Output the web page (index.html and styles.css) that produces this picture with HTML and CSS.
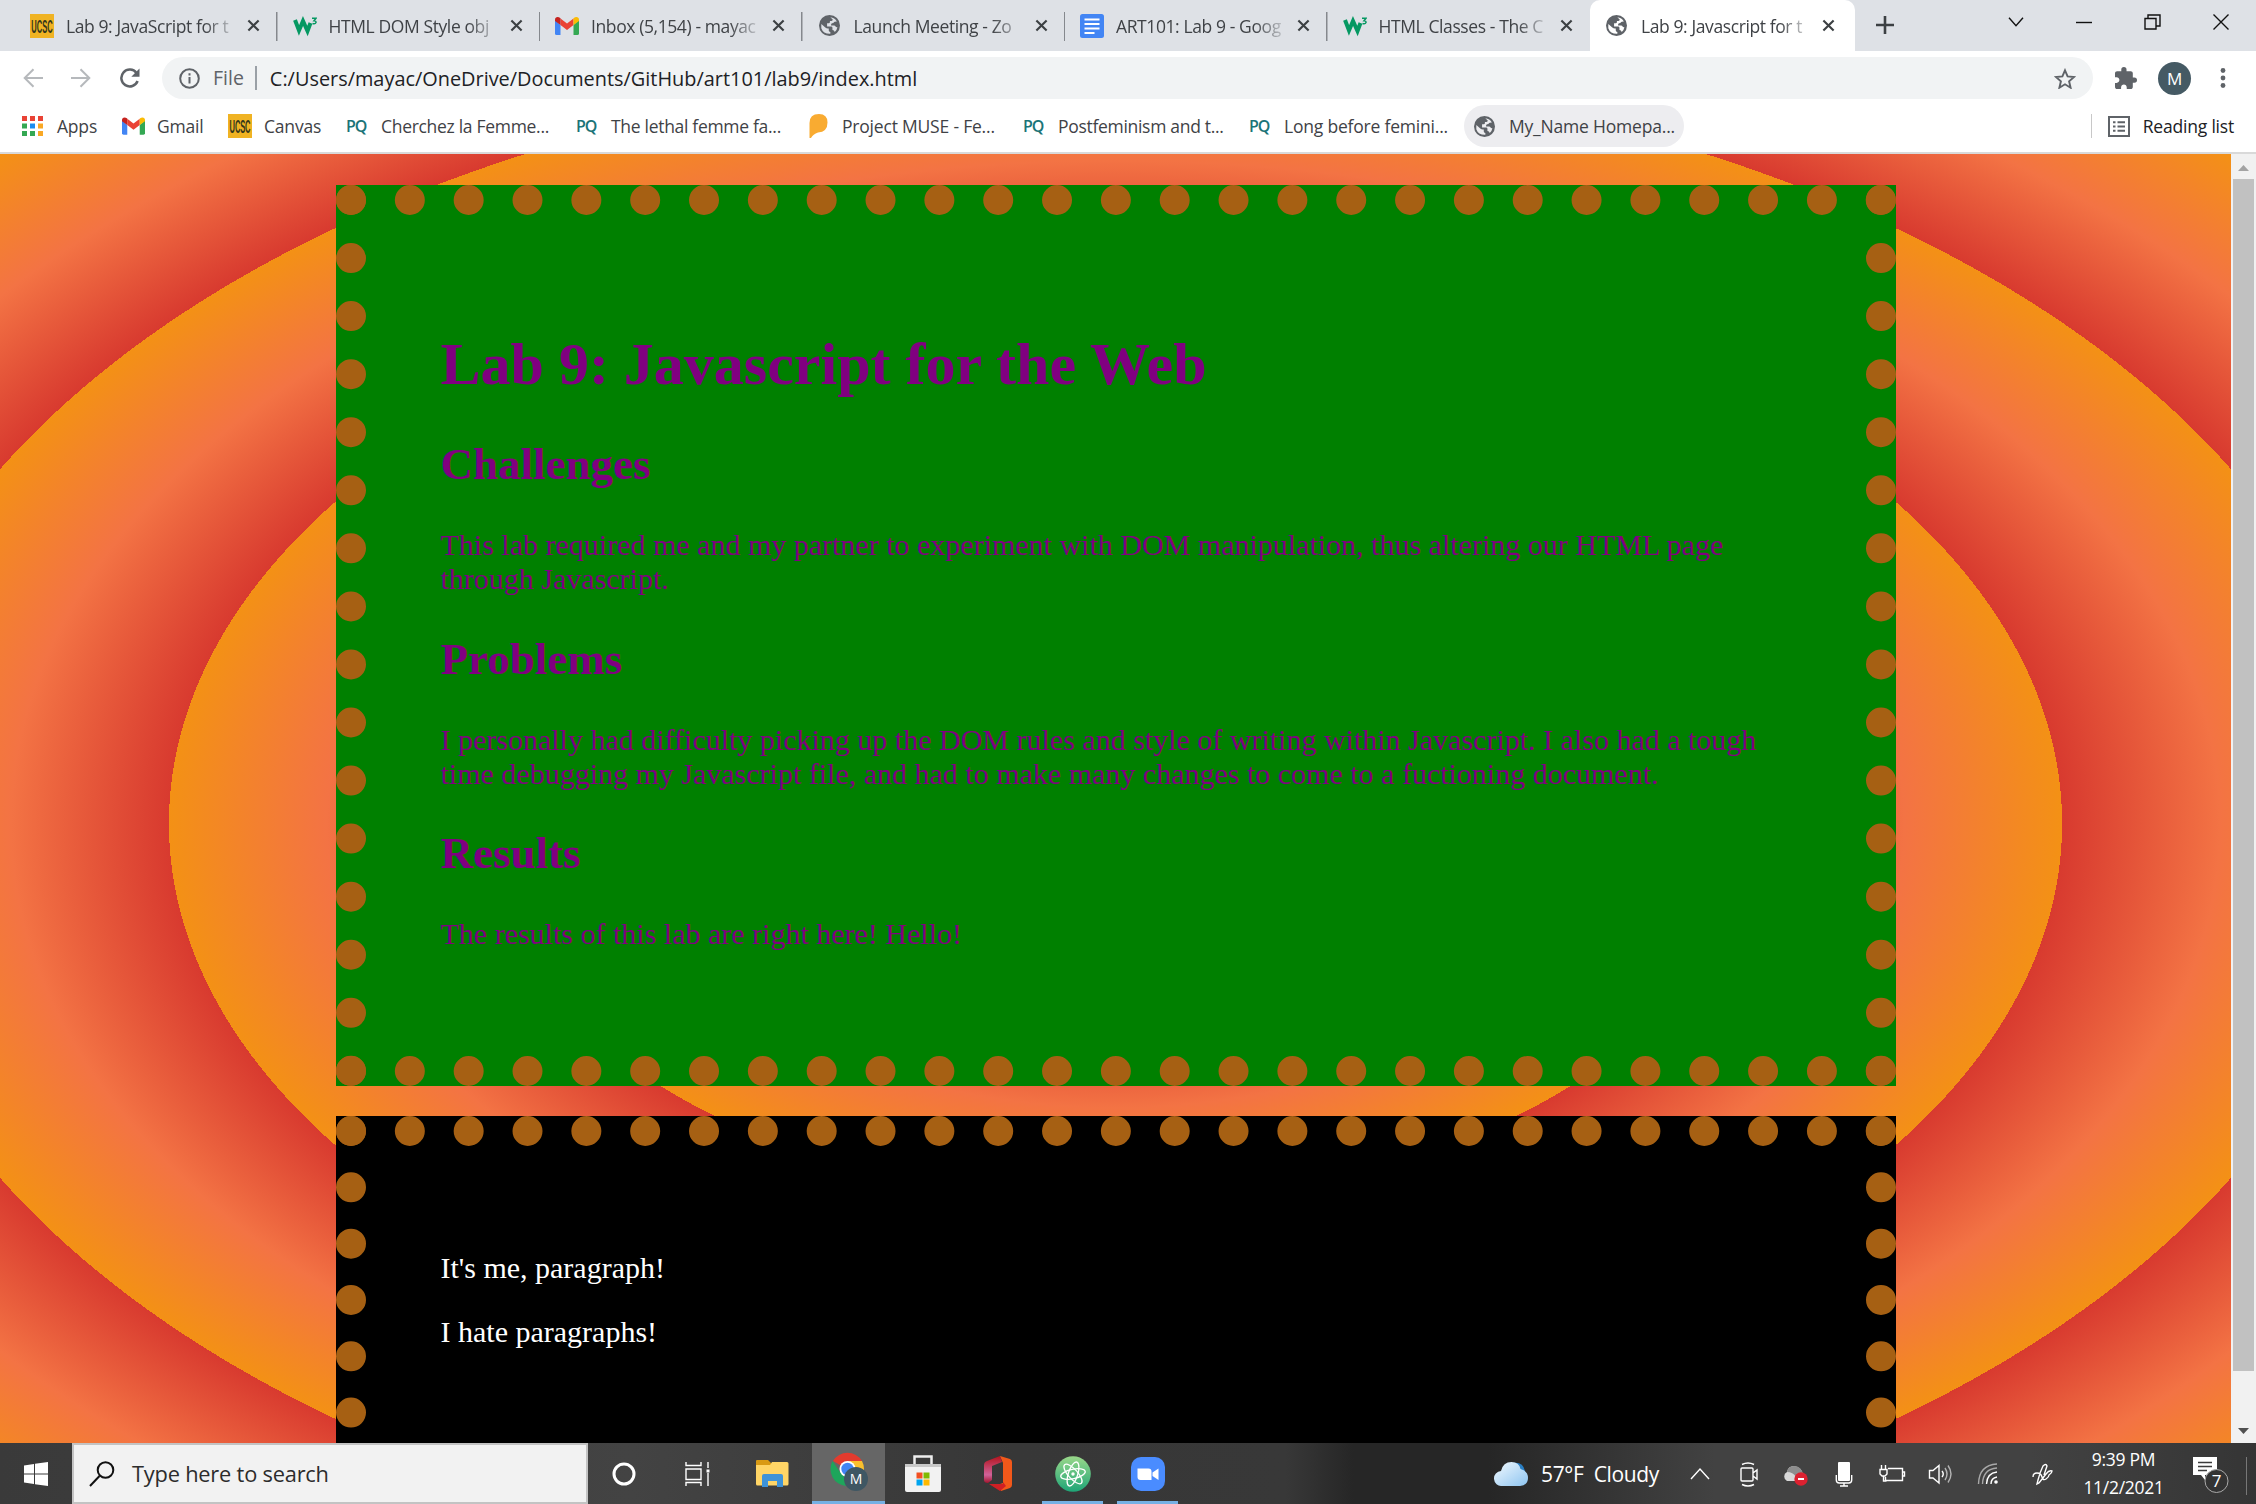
FILE: index.html
```html
<!DOCTYPE html>
<html lang="en">
<head>
<meta charset="utf-8">
<title>Lab 9: Javascript for the Web</title>
<link rel="stylesheet" href="styles.css">
</head>
<body>
<svg class="defs" width="0" height="0">
  <defs>
    <symbol id="globe" viewBox="2 2 20 20"><path fill="#5f6368" fill-rule="evenodd" d="M12 2a10 10 0 1 0 0 20 10 10 0 0 0 0-20zM4.200 10.500 8 14q1 .8 2.500.8h.8v2q0 1.400 1.500 1.400v1.600Q6 20 4.200 14.500zM12.800 4.200Q17 4.500 19 8.200l-2 .3q-1 .2-1.300 1.200l-1.200.2q-1 .3-1 1.300v.8h3q1.500 0 1.500 1.500l1.500.2q-.5 3-2.500 4.500-.5-1.700-2.200-1.900v-2.100q0-1.300-1.300-1.300H9.700v-3h1.500q1.200 0 1.200-1.200V7.600h1.500q1.200 0 1.200-1.200z"/></symbol>
    <symbol id="gmail" viewBox="0 0 24 18"><path fill="#4285f4" d="M0 3v13.500Q0 18 1.600 18H5.500V8z"/><path fill="#34a853" d="M24 3v13.500q0 1.500-1.600 1.500H18.500V8z"/><path fill="#ea4335" d="M5.500 1.500 12 6.500l6.500-5V8L12 13 5.500 8z"/><path fill="#c5221f" d="M0 2.500C0 0 3 -1 5.500 1.300V8L0 4z"/><path fill="#fbbc04" d="M24 2.500C24 0 21 -1 18.500 1.300V8L24 4z"/></symbol>
    <symbol id="w3" viewBox="0 0 24 18"><path fill="none" stroke="#059862" stroke-width="4" d="M2 3l4 10.500L10 4l4.500 10 3-8"/><path fill="none" stroke="#059862" stroke-width="1.500" d="M19 1.200h4L21 3.800q2.200 0 2 1.700-.8 2-3.500 1"/></symbol>
    <symbol id="x" viewBox="0 0 14 14"><path stroke="#3c4043" stroke-width="2.300" d="M1.500 1.500l11 11M12.500 1.500l-11 11"/></symbol>
    <symbol id="ucsc" viewBox="0 0 24 24"><path fill="#f0b323" d="M0 0h24v24H0z"/><text transform="translate(12 18.500) scale(.72 1.700)" text-anchor="middle" font-family="Liberation Sans" font-weight="bold" font-size="10.500" fill="#33361c">UCSC</text></symbol>
  </defs>
</svg>
<div class="screen">
  <header class="tabs">
    <div class="tab"><svg class="fav"><use href="#ucsc"/></svg><span class="title">Lab 9: JavaScript for t</span><svg class="close"><use href="#x"/></svg></div>
    <div class="tab"><svg class="fav"><use href="#w3"/></svg><span class="title">HTML DOM Style obj</span><svg class="close"><use href="#x"/></svg></div>
    <div class="tab"><svg class="fav"><use href="#gmail"/></svg><span class="title">Inbox (5,154) - mayac</span><svg class="close"><use href="#x"/></svg></div>
    <div class="tab"><svg class="fav fit"><use href="#globe"/></svg><span class="title">Launch Meeting - Zo</span><svg class="close"><use href="#x"/></svg></div>
    <div class="tab"><svg class="fav" viewBox="0 0 24 24"><rect width="24" height="24" rx="2.500" fill="#4285f4"/><path stroke="#fff" stroke-width="2.200" d="M4.500 5.500h15M4.500 10h15M4.500 14.500h15M4.500 19h10"/></svg><span class="title">ART101: Lab 9 - Goog</span><svg class="close"><use href="#x"/></svg></div>
    <div class="tab last"><svg class="fav"><use href="#w3"/></svg><span class="title">HTML Classes - The C</span><svg class="close"><use href="#x"/></svg></div>
    <div class="tab active"><svg class="fav fit"><use href="#globe"/></svg><span class="title">Lab 9: Javascript for t</span><svg class="close"><use href="#x"/></svg></div>
    <svg class="plus" viewBox="0 0 18 18"><path stroke="#3c4043" stroke-width="2.600" d="M9 0v18M0 9h18"/></svg>
    <div class="window-buttons">
      <svg width="16" height="10" viewBox="0 0 16 10"><path d="M1 .8l7 8 7-8"/></svg>
      <svg width="16" height="10" viewBox="0 0 16 10"><path d="M0 5.500h16"/></svg>
      <svg width="17" height="16" viewBox="0 0 17 16"><path d="M1 4.500h11v10.500H1zM4 4.500V1h12v11h-4"/></svg>
      <svg width="16" height="16" viewBox="0 0 16 16"><path d="M.5.5l15 15M15.500.5l-15 15"/></svg>
    </div>
  </header>
  <div class="toolbar">
    <svg class="nav" viewBox="0 0 20 20"><path fill="none" stroke="#b6b9bc" stroke-width="2" d="M20 10H2M10.500 1.200 1.700 10l8.800 8.800"/></svg>
    <svg class="nav" viewBox="0 0 20 20"><path fill="none" stroke="#b6b9bc" stroke-width="2" d="M0 10h18M9.500 1.200l8.800 8.800-8.800 8.800"/></svg>
    <svg class="nav reload" viewBox="0 0 22 20"><path fill="none" stroke="#5f6368" stroke-width="2.500" d="M17.500 5A8.400 8.400 0 1 0 18.600 13"/><path fill="#5f6368" d="M20.500.5v8.200h-8.200z"/></svg>
    <div class="omnibox">
      <svg width="21" height="21" viewBox="0 0 21 21"><circle cx="10.500" cy="10.500" r="9.300" fill="none" stroke="#5f6368" stroke-width="2"/><path stroke="#5f6368" stroke-width="2" d="M10.500 9v6.500M10.500 5.200v2.200"/></svg>
      <span class="scheme">File</span>
      <span class="url">C:/Users/mayac/OneDrive/Documents/GitHub/art101/lab9/index.html</span>
      <svg class="star" width="22" height="21" viewBox="0 0 22 21"><path fill="none" stroke="#5f6368" stroke-width="1.900" stroke-linejoin="miter" d="M11 2.300l2.600 6.100 6.500.6-5 4.300 1.500 6.400L11 16.300l-5.600 3.400 1.500-6.400-5-4.300 6.500-.6z"/></svg>
    </div>
    <svg class="puzzle" width="22" height="22" viewBox="2 1 21 21"><path fill="#5f6368" d="M20.500 11H19V7c0-1.100-.9-2-2-2h-4V3.500a2.500 2.500 0 0 0-5 0V5H4c-1.100 0-2 .9-2 2v3.800h1.500c1.500 0 2.700 1.200 2.700 2.700S5 16.200 3.500 16.200H2V20c0 1.100.9 2 2 2h3.800v-1.500c0-1.500 1.200-2.700 2.700-2.700s2.700 1.200 2.700 2.700V22H17c1.100 0 2-.9 2-2v-4h1.500a2.500 2.500 0 0 0 0-5z"/></svg>
    <span class="avatar">M</span>
    <svg width="6" height="20" viewBox="0 0 6 20"><g fill="#5f6368"><circle cx="3" cy="2.500" r="2.400"/><circle cx="3" cy="10" r="2.400"/><circle cx="3" cy="17.500" r="2.400"/></g></svg>
  </div>
  <nav class="bookmarks">
    <a class="b-apps"><svg width="21" height="20" viewBox="0 0 21 20"><path fill="#e94335" d="M0 0h5v5H0zM8 0h5v5H8zM16 0h5v5h-5z"/><path fill="#34a853" d="M0 7.500h5v5H0zM0 15h5v5H0zM8 15h5v5H8z"/><path fill="#1a8cf0" d="M8 7.500h5v5H8z"/><path fill="#f9a825" d="M16 7.500h5v5h-5zM16 15h5v5h-5z"/></svg><span>Apps</span></a>
    <a class="b-gmail"><svg width="23" height="18"><use href="#gmail"/></svg><span>Gmail</span></a>
    <a class="b-canvas"><svg width="24" height="24"><use href="#ucsc"/></svg><span>Canvas</span></a>
    <a class="b-cherchez"><b>PQ</b><span>Cherchez la Femme...</span></a>
    <a class="b-lethal"><b>PQ</b><span>The lethal femme fa...</span></a>
    <a class="b-muse"><svg width="19" height="24" viewBox="0 0 19 24"><path fill="#f9ab31" d="M.5 9Q.5 0 10 0q8.500 0 8.500 8.500Q18.500 18 9 18.500 4 20 2 24H.5z"/></svg><span>Project MUSE - Fe...</span></a>
    <a class="b-post"><b>PQ</b><span>Postfeminism and t...</span></a>
    <a class="b-long"><b>PQ</b><span>Long before femini...</span></a>
    <a class="b-home"><svg width="21" height="21"><use href="#globe"/></svg><span>My_Name Homepa...</span></a>
    <a class="b-reading"><svg width="22" height="21" viewBox="0 0 22 21"><path fill="none" stroke="#5f6368" stroke-width="2" d="M1 1h20v19H1z"/><path stroke="#5f6368" stroke-width="2" d="M5 6.200h2.500M9.500 6.200H17M5 10.500h2.500M9.500 10.500H17M5 14.800h2.500M9.500 14.800H17"/></svg><span>Reading list</span></a>
  </nav>
  <div class="viewport">
    <main class="page">
      <section class="box green">
        <h1>Lab 9: Javascript for the Web</h1>
        <h2>Challenges</h2>
        <p>This lab required me and my partner to experiment with DOM manipulation, thus altering our HTML page through Javascript.</p>
        <h2>Problems</h2>
        <p>I personally had difficulty picking up the DOM rules and style of writing within Javascript. I also had a tough time debugging my Javascript file, and had to make many changes to come to a fuctioning document.</p>
        <h2>Results</h2>
        <p>The results of this lab are right here! Hello!</p>
      </section>
      <section class="box black">
        <p>It's me, paragraph!</p>
        <p>I hate paragraphs!</p>
      </section>
    </main>
    <div class="scrollbar">
      <svg width="25" height="25" viewBox="0 0 25 25"><path fill="#a3a3a3" d="M7 17l5.500-6 5.500 6z"/></svg>
      <div class="track"><div class="thumb"></div></div>
      <svg width="25" height="25" viewBox="0 0 25 25"><path fill="#505050" d="M7 10h11l-5.500 6z"/></svg>
    </div>
  </div>
  <footer class="taskbar">
    <div class="start"><svg width="24" height="24" viewBox="0 0 24 24"><path fill="#fff" d="M0 3.500 10 2v9.500H0zM11 1.800 24 0v11.500H11zM0 12.500h10V22L0 20.500zM11 12.500h13V24l-13-1.800z"/></svg></div>
    <div class="search"><svg width="26" height="26" viewBox="0 0 26 26"><path fill="none" stroke="#111" stroke-width="2" d="M1 25 10.500 15"/><circle cx="16.500" cy="9" r="7.800" fill="none" stroke="#111" stroke-width="2"/></svg><span>Type here to search</span></div>
    <div class="cell cortana"><svg width="24" height="24" viewBox="0 0 24 24"><circle cx="12" cy="12" r="10" fill="none" stroke="#fff" stroke-width="3"/></svg></div>
    <div class="cell taskview"><svg width="25" height="24" viewBox="0 0 25 24"><path fill="none" stroke="#fff" stroke-width="1.400" d="M1 0v3.500h15V0M1 7h15v10.500H1zM1 24v-3.500h15V24M23 0v6M23 11v13"/><path fill="#fff" d="M21.500 7.500h3v3h-3z"/></svg></div>
    <div class="cell"><svg width="33" height="27" viewBox="0 0 33 27"><path fill="#d99a14" d="M0 1q0-1 1-1h11l3 3v4H0z"/><path fill="#ffd566" d="M0 5h14l2-3h15q1.500 0 1.500 1.500V24q0 1.500-1.500 1.500H1.500Q0 25.500 0 24z"/><path fill="#3f93d8" d="M6 27V16q0-2 2-2h17q2 0 2 2v11h-6v-6h-9v6z"/></svg></div>
    <div class="cell chrome"><svg width="42" height="40" viewBox="0 0 42 40"><path fill="#e33b2e" d="M17 17 3 9A17 17 0 0 1 32 9H17z"/><path fill="#1ea55b" d="M2.500 9A17 17 0 0 0 16 34l6-12-12-2z"/><path fill="#fbc02d" d="M17 9h15a17 17 0 0 1-15 25l8-16z"/><circle cx="17.500" cy="17" r="8" fill="#fff"/><circle cx="17.500" cy="17" r="6.200" fill="#4285f4"/><circle cx="26" cy="27" r="12" fill="#3f5763"/><text x="26" y="32" text-anchor="middle" font-size="14" fill="#fff">M</text></svg></div>
    <div class="cell"><svg width="36" height="37" viewBox="0 0 36 37"><path fill="none" stroke="#eee" stroke-width="2.500" d="M9.500 12V1.500h17V12"/><path fill="#f2f2f2" d="M0 9h36v26q0 2-2 2H2q-2 0-2-2z"/><path fill="#c8c8c8" d="M0 9h36v3H0z"/><path fill="#f25022" d="M11.500 17.500h6v6h-6z"/><path fill="#7fba00" d="M18.500 17.500h6v6h-6z"/><path fill="#00a4ef" d="M11.500 24.500h6v6h-6z"/><path fill="#ffb900" d="M18.500 24.500h6v6h-6z"/></svg></div>
    <div class="cell"><svg width="28" height="35" viewBox="0 0 28 35"><defs><linearGradient id="o" x2="0" y2="1"><stop stop-color="#b3121c"/><stop offset=".7" stop-color="#d0639a"/><stop offset="1" stop-color="#a3142c"/></linearGradient></defs><path fill="url(#o)" d="M16 0 3 5Q0 6 0 9v15q0 3 4 3l4-3V10l10-4z"/><path fill="#f2581a" d="m16 0 10 3q2 1 2 3v23q0 2-2 3l-9 3-1-7 3-1V7z"/><path fill="#cf1f24" d="M5 28h14v-2l3 4-6 5z"/></svg></div>
    <div class="cell open"><svg width="36" height="36" viewBox="0 0 36 36"><defs><linearGradient id="a" x2="0" y2="1"><stop stop-color="#9ad88a"/><stop offset="1" stop-color="#1ea577"/></linearGradient></defs><circle cx="18" cy="18" r="17.800" fill="url(#a)"/><g fill="none" stroke="#fff" stroke-width="1.300"><ellipse cx="18" cy="18" rx="12.500" ry="4.700" transform="rotate(-12 18 18)"/><ellipse cx="18" cy="18" rx="12.500" ry="4.700" transform="rotate(48 18 18)"/><ellipse cx="18" cy="18" rx="12.500" ry="4.700" transform="rotate(108 18 18)"/></g><circle cx="18" cy="18" r="1.700" fill="#fff"/></svg></div>
    <div class="cell open"><svg width="34" height="34" viewBox="0 0 34 34"><rect width="34" height="34" rx="10" fill="#4a8cff"/><path fill="#fff" d="M6.500 11.500h11q3 0 3 3V23h-11q-3 0-3-3zM21.500 15.500l6-4V23l-6-4z"/></svg></div>
    <div class="tray">
      <div class="weather"><svg width="34" height="24" viewBox="0 0 34 24"><defs><linearGradient id="c" x2="1" y2="1"><stop stop-color="#f3faff"/><stop offset="1" stop-color="#8dc4f0"/></linearGradient></defs><path fill="#2a7fc4" d="M18 1q11-2 13 8l2 8-8-2z"/><path fill="url(#c)" d="M8 24a7.500 7.500 0 0 1-1-15Q9 0 17.500 0 25 0 26.500 7 34 9 34 16t-8 8z"/></svg><span>57°F&nbsp; Cloudy</span></div>
      <svg class="ti" viewBox="-24 -20 48 40"><path d="M-9 5 0-5l9 10"/></svg>
      <svg class="ti" viewBox="-24 -20 48 40"><path d="M-6-6H4Q5-6 5-5V6q0 1-1 1H-6q-1 0-1-1V-5q0-1 1-1zM5-1l4-3v9L5 2M-6-9.500q6-3 12 0M-6 10.500q6 3 12 0"/></svg>
      <svg class="ti" viewBox="-24 -20 48 40"><path fill="#d8d8d8" stroke="none" d="M-9 7a5 5 0 0 1 0-9Q-8-8-2-8 6-7 7 1L4 7z"/><path fill="#8d8d8d" stroke="none" d="M-9-2Q-8-8-2-8 5-8 7 0L0 3q-3-5-9-5z"/><circle cx="5" cy="5" r="6.700" fill="#dc2130" stroke="none"/><path stroke-width="2" d="M2 5h6"/></svg>
      <svg class="ti" viewBox="-24 -20 48 40"><rect x="-6" y="-12" width="12" height="19" rx="1" fill="#fff" stroke="none"/><path stroke-width="1.400" d="M-7.700 1v5q0 3 3 3h9.400q3 0 3-3V1M0 9v3M-4 12h8"/></svg>
      <svg class="ti" viewBox="-24 -20 48 40"><path d="M-4-5.500H10.500V6.500H-6.500V3M11-2h1.500v4H11M-10.500-9v4M-6.500-9v4M-12-4.500h7V0l-2 2h-3l-2-2zM-8.500 2v5h3"/></svg>
      <svg class="ti" viewBox="-24 -20 48 40"><path d="M-10.500-3.500h3.500l6-5V9l-6-5h-3.500zM2-3q2.500 3 0 6"/><path opacity=".6" d="M5-6q4 6 0 12M8-8.500q6 8.500 0 17"/></svg>
      <svg class="ti" viewBox="-24 -20 48 40"><circle cx="8" cy="8" r="1.800" fill="#fff" stroke="none"/><path d="M3 10q0-6 6-7M-1.500 10Q-1-1 9-2"/><path opacity=".55" d="M-5.500 10Q-5-5 9-6M-9.500 10Q-9-9 9-10"/></svg>
      <svg class="ti pen" viewBox="-24 -20 48 40"><path d="M-9 3Q-9-1-5-1-1-1 0 3T4 5 7 1Q10-1 10-3 7-4 4 0L-3 9-5 10-4 6Q-2-2 1-8q3-3 4 0L2 1"/></svg>
      <div class="clock"><span>9:39 PM</span><span>11/2/2021</span></div>
      <div class="notify"><svg width="38" height="38" viewBox="0 0 38 38"><path fill="#fff" d="M1 0h24v18H13v5l-4-5H1z"/><path stroke="#3b3b3b" stroke-width="1.300" d="M6 5.500h14M6 9.500h14M6 13.500h9"/><circle cx="24.500" cy="24" r="11.500" fill="#333" stroke="#aaa"/><text x="24.500" y="30" text-anchor="middle" font-size="17" fill="#fff">7</text></svg></div>
    </div>
  </footer>
</div>
</body>
</html>
```
FILE: styles.css
```css
* { box-sizing: border-box; }
body { margin: 0; overflow: hidden; font-family: "Open Sans", "Noto Sans", sans-serif; }
.defs { position: absolute; }
.screen { display: flex; flex-direction: column; width: 2256px; height: 1504px; overflow: hidden; background: #fff; }
svg { display: block; flex: none; }

.tabs { display: flex; align-items: flex-start; height: 51px; padding-left: 15px; background: #dee1e6; }
.tab { display: flex; flex: none; align-items: center; width: 262.5px; height: 51px; padding-left: 15px; background: linear-gradient(#85888d, #85888d) right 12px / 1.5px 29px no-repeat; }
.tab.last { background: none; }
.tab.active { width: 265px; background: #fff; border-radius: 10px 10px 0 0; }
.fav { width: 24px; height: 24px; margin-right: 12px; }
.fit { width: 21px; height: 21px; margin: 0 14px 0 1px; }
.title { width: 177px; white-space: nowrap; font-size: 17.500px; letter-spacing: -.4px; color: #3f4246; mask-image: linear-gradient(90deg, #000 78%, transparent 98%); }
.close { width: 13px; height: 13px; margin-left: 4px; }
.plus { width: 18px; height: 18px; margin: 16px 0 0 21px; }
.window-buttons { display: flex; align-items: center; justify-content: space-between; width: 221px; height: 43px; margin-left: auto; margin-right: 27px; }
.window-buttons path { fill: none; stroke: #111; stroke-width: 1.400; }

.toolbar { display: flex; align-items: center; height: 54px; padding: 0 30px 0 23px; }
.nav { width: 20px; height: 20px; margin-right: 28px; }
.reload { width: 22px; margin-right: 21px; }
.omnibox { display: flex; align-items: center; width: 1935px; height: 42px; padding: 0 17px; border-radius: 21px; background: #f1f3f4; }
.scheme { margin-left: 13px; padding-right: 11px; border-right: 2px solid #9aa0a6; color: #5f6368; font-size: 19.500px; line-height: 24px; }
.url { margin-left: 13px; color: #202124; font-size: 19.900px; }
.star { margin-left: auto; }
.puzzle { margin-left: 22px; }
.avatar { width: 33px; height: 33px; margin: 0 29px 0 21px; border-radius: 50%; background: #455a64; color: #fff; font-size: 17px; line-height: 33px; text-align: center; }

.bookmarks { display: flex; align-items: flex-start; height: 49px; padding-left: 22px; border-bottom: 2px solid #d9d9d9; color: #3f4246; font-size: 17.500px; letter-spacing: -.2px; white-space: nowrap; }
.bookmarks a { display: flex; flex: none; align-items: center; height: 42px; gap: 14px; }
.bookmarks b { width: 21px; color: #1b7478; font-size: 16px; font-weight: 600; letter-spacing: -1px; }
.bookmarks .b-apps { width: 100px; }
.bookmarks .b-gmail { width: 106px; gap: 12px; }
.bookmarks .b-canvas { width: 118px; gap: 12px; }
.bookmarks .b-cherchez { width: 230px; letter-spacing: -.3px; }
.bookmarks .b-lethal { width: 233px; letter-spacing: -.3px; }
.bookmarks .b-muse { width: 214px; }
.bookmarks .b-post { width: 226px; letter-spacing: -.3px; }
.bookmarks .b-long { width: 215px; }
.bookmarks .b-home { width: 220px; padding-left: 10px; border-radius: 21px; background: #ededf0; }
.bookmarks .b-reading { height: 24px; margin: 9px 22px 0 auto; padding-left: 16px; gap: 13px; border-left: 1.500px solid #c8c8c8; color: #202124; }

.viewport { display: flex; height: 1289px; overflow: hidden; }
.page { flex: none; width: 2231px; height: 1339px; padding-top: 31px; font-family: "Liberation Serif", "Times New Roman", serif; font-size: 30px; line-height: 34px; background: repeating-radial-gradient(#d83a2f, #f37344 10%, #f39115 20%); }
.box { width: 1560px; margin: 0 auto 30px; padding: 75px; border: 30px dotted #a66013; }
.box h1 { margin: 40.200px 0; font-size: 60px; line-height: 69px; }
.box h2 { margin: 37.500px 0; font-size: 45px; line-height: 51.500px; }
.box p { margin: 30px 0; }
.box h1 { margin-bottom: 40.200px; }
.green { height: 901px; background: #008000; color: #800080; }
.black { height: 368px; background: #000; color: #fff; }
.scrollbar { display: flex; flex-direction: column; width: 25px; height: 1289px; background: #f1f1f1; }
.track { flex: 1; padding: 0 2px; }
.thumb { height: 1192px; background: #c1c1c1; }

.taskbar { display: flex; height: 61px; background: linear-gradient(90deg, #3a3a3a, #434343 28%, #373737 45%, #383838 57%, #262626 60%, #262626 66%, #424242 76%, #424242 90%, #353535); color: #fff; }
.start { display: flex; flex: none; align-items: center; justify-content: center; width: 72px; }
.search { display: flex; flex: none; align-items: center; width: 516px; padding-left: 15px; gap: 17px; border: 2px solid #c3c3c3; background: #f2f2f2; color: #2c2c2c; font-size: 21.800px; letter-spacing: -.2px; }
.cell { display: flex; flex: none; align-items: center; justify-content: center; width: 75px; }
.cortana { width: 72px; }
.chrome { margin-left: 2px; width: 73px; padding-left: 4px; background: #666; border-bottom: 3px solid #76b0e4; }
.open { background: linear-gradient(#76b0e4, #76b0e4) center bottom / 61px 3px no-repeat; }
.tray { display: flex; align-items: center; margin-left: auto; width: 762px; }
.weather { display: flex; align-items: center; gap: 13px; width: 182px; font-size: 21px; letter-spacing: -.35px; white-space: nowrap; }
.ti { width: 48px; height: 40px; fill: none; stroke: #fff; stroke-width: 1.400; }
.pen { margin-left: 6px; }
.clock { display: flex; flex-direction: column; align-items: center; width: 115px; margin-top: -2px; font-size: 17.500px; line-height: 28px; letter-spacing: -.3px; }
.notify { margin: 5px 0 0 11px; padding-right: 16px; border-right: 1px solid #777; }
```
